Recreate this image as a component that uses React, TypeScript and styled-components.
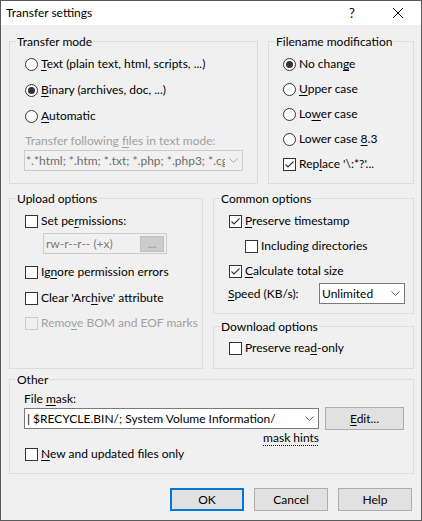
import React from "react";
import styled, { createGlobalStyle } from "styled-components";

const GlobalStyle = createGlobalStyle`
  html, body {
    margin: 0;
    padding: 0;
    background: #fff;
  }
  body {
    font-family: Lato, "Noto Sans", sans-serif;
    font-size: 12px;
    color: #000;
  }
  * {
    box-sizing: border-box;
  }
`;

const Window = styled.div`
  width: 422px;
  height: 521px;
  border: 1px solid #5a5a5a;
  background: #f0f0f0;
  display: flex;
  flex-direction: column;
`;

const TitleBar = styled.div`
  height: 24px;
  flex: none;
  background: #fff;
  display: flex;
  align-items: center;
  padding-left: 5px;
`;

const Caption = styled.div`
  flex: 1;
  line-height: 16px;
`;

const CaptionButton = styled.div`
  width: 46px;
  height: 24px;
  display: flex;
  align-items: center;
  justify-content: center;
  font-size: 13px;
`;

const Client = styled.div`
  flex: 1;
  display: flex;
  flex-direction: column;
  padding: 16px 7px 0 8px;
`;

const TopRow = styled.div`
  display: grid;
  grid-template-columns: 249px 146px;
  column-gap: 10px;
`;

const MidRow = styled.div`
  display: grid;
  grid-template-columns: 194px 201px;
  column-gap: 10px;
  margin-top: 14px;
`;

const SideColumn = styled.div`
  display: flex;
  flex-direction: column;
  gap: 12px;
`;

const Group = styled.div<{ $mt?: number }>`
  border: 1px solid #dcdcdc;
  display: flex;
  flex-direction: column;
  margin-top: ${p => p.$mt ?? 0}px;
`;

const GroupTitle = styled.div`
  align-self: flex-start;
  margin: -8px 0 0 6px;
  padding: 0 1px;
  line-height: 15px;
  background: #f0f0f0;
  white-space: nowrap;
`;

const GroupBody = styled.div<{ $pl: number; $pr?: number; $pb?: number }>`
  display: flex;
  flex-direction: column;
  padding: 0 ${p => p.$pr ?? 0}px ${p => p.$pb ?? 0}px ${p => p.$pl}px;
`;

const Option = styled.div<{ $mt?: number; $indent?: number; $disabled?: boolean }>`
  display: flex;
  align-items: center;
  gap: 3px;
  height: 16px;
  line-height: 16px;
  white-space: nowrap;
  margin-top: ${p => p.$mt ?? 0}px;
  margin-left: ${p => p.$indent ?? 0}px;
  color: ${p => (p.$disabled ? "#a0a0a0" : "#000")};
`;

const Label = styled.div<{ $mt?: number; $ml?: number; $disabled?: boolean }>`
  height: 16px;
  line-height: 16px;
  white-space: nowrap;
  margin-top: ${p => p.$mt ?? 0}px;
  margin-left: ${p => p.$ml ?? 0}px;
  color: ${p => (p.$disabled ? "#a0a0a0" : "#000")};
`;

const Key = styled.span`
  text-decoration: underline;
  text-underline-offset: 2px;
`;

const RadioCircle = styled.span<{ $on?: boolean }>`
  width: 13px;
  height: 13px;
  flex: none;
  border: 1px solid #333;
  border-radius: 50%;
  background: #fff;
  display: flex;
  align-items: center;
  justify-content: center;

  &::after {
    content: "";
    display: ${p => (p.$on ? "block" : "none")};
    width: 7px;
    height: 7px;
    border-radius: 50%;
    background: #333;
  }
`;

const Box = styled.span<{ $disabled?: boolean }>`
  width: 13px;
  height: 13px;
  flex: none;
  border: 1px solid ${p => (p.$disabled ? "#cccccc" : "#333")};
  background: ${p => (p.$disabled ? "#f0f0f0" : "#fff")};
  display: flex;
  align-items: center;
  justify-content: center;
`;

const Combo = styled.div<{ $w: number; $mt?: number; $ml?: number; $disabled?: boolean }>`
  width: ${p => p.$w}px;
  height: 21px;
  flex: none;
  margin-top: ${p => p.$mt ?? 0}px;
  margin-left: ${p => p.$ml ?? 0}px;
  border: 1px solid ${p => (p.$disabled ? "#cccccc" : "#7a7a7a")};
  background: ${p => (p.$disabled ? "#f0f0f0" : "#fff")};
  color: ${p => (p.$disabled ? "#6d6d6d" : "#000")};
  display: flex;
  align-items: center;
  padding-left: ${p => (p.$disabled ? 1 : 2)}px;
`;

const ComboText = styled.span`
  flex: 1;
  overflow: hidden;
  white-space: nowrap;
  line-height: 16px;
`;

const ComboArrow = styled.span`
  width: 17px;
  flex: none;
  display: flex;
  justify-content: center;
  align-items: center;
`;

const PermsField = styled.div`
  width: 124px;
  height: 21px;
  margin: 4px 0 0 18px;
  border: 1px solid #cccccc;
  background: #f0f0f0;
  color: #7a7a7a;
  display: flex;
  align-items: center;
  padding: 0 2px 0 2px;
`;

const PermsText = styled.span`
  flex: 1;
  line-height: 16px;
`;

const DotsButton = styled.span`
  width: 24px;
  height: 16px;
  background: #cccccc;
  border: 1px solid #bfbfbf;
  color: #8a8a8a;
  display: flex;
  align-items: center;
  justify-content: center;
  line-height: 12px;
`;

const SpeedRow = styled.div`
  display: flex;
  align-items: center;
  justify-content: space-between;
  margin-top: 4px;
  height: 21px;
`;

const MaskRow = styled.div`
  display: flex;
  align-items: center;
  gap: 6px;
  height: 23px;
  margin-left: -1px;
`;

const HintRow = styled.div`
  width: 295px;
  margin-left: -1px;
  height: 16px;
  line-height: 16px;
  text-align: right;
`;

const Hint = styled.span`
  text-decoration: underline dotted #000;
  text-underline-offset: 3px;
`;

const Button = styled.div<{ $w: number; $default?: boolean }>`
  width: ${p => p.$w}px;
  height: 23px;
  flex: none;
  background: #e1e1e1;
  border: ${p => (p.$default ? "2px solid #0078d7" : "1px solid #adadad")};
  display: flex;
  align-items: center;
  justify-content: center;
  line-height: 16px;
`;

const ButtonRow = styled.div`
  display: flex;
  justify-content: flex-end;
  gap: 10px;
  margin-top: 14px;
  padding-right: 2px;
`;

const Chevron = ({ color = "#606060" }: { color?: string }) => (
  <svg width="9" height="5" viewBox="0 0 9 5">
    <path d="M0.5 0.5 L4.5 4.5 L8.5 0.5" fill="none" stroke={color} strokeWidth="1" />
  </svg>
);

const Radio = ({ on, children, mt }: { on?: boolean; children: React.ReactNode; mt?: number }) => (
  <Option $mt={mt}>
    <RadioCircle $on={on} />
    <span>{children}</span>
  </Option>
);

const Check = ({
  on,
  disabled,
  children,
  mt,
  indent,
}: {
  on?: boolean;
  disabled?: boolean;
  children: React.ReactNode;
  mt?: number;
  indent?: number;
}) => (
  <Option $mt={mt} $indent={indent} $disabled={disabled}>
    <Box $disabled={disabled}>
      {on && (
        <svg width="11" height="11" viewBox="0 0 11 11">
          <path d="M1.5 5.5 L4 8 L9.5 2.5" fill="none" stroke="#333" strokeWidth="1.1" />
        </svg>
      )}
    </Box>
    <span>{children}</span>
  </Option>
);

const textMask =
  "*.*html; *.htm; *.txt; *.php; *.php3; *.cgi; *.c; *.cpp; *.h; *.pas; *.bas; *.tex; *.pl; *.js; .htaccess; *.xtml; *.css; *.cfg; *.ini; *.sh; *.xml";

export default function App() {
  return (
    <>
      <GlobalStyle />
      <Window>
        <TitleBar>
          <Caption>Transfer settings</Caption>
          <CaptionButton>?</CaptionButton>
          <CaptionButton>
            <svg width="10" height="10" viewBox="0 0 10 10">
              <path d="M0 0 L10 10 M10 0 L0 10" stroke="#000" strokeWidth="1" />
            </svg>
          </CaptionButton>
        </TitleBar>
        <Client>
          <TopRow>
            <Group>
              <GroupTitle>Transfer mode</GroupTitle>
              <GroupBody $pl={15} $pb={12}>
                <Radio mt={7}>
                  <Key>T</Key>ext (plain text, html, scripts, ...)
                </Radio>
                <Radio on mt={10}>
                  <Key>B</Key>inary (archives, doc, ...)
                </Radio>
                <Radio mt={10}>
                  <Key>A</Key>utomatic
                </Radio>
                <Label $mt={9} $disabled>
                  Transfer following <Key>f</Key>iles in text mode:
                </Label>
                <Combo $w={219} $mt={1} $ml={-1} $disabled>
                  <ComboText>{textMask}</ComboText>
                  <ComboArrow>
                    <Chevron color="#a8a8a8" />
                  </ComboArrow>
                </Combo>
              </GroupBody>
            </Group>
            <Group>
              <GroupTitle>Filename modification</GroupTitle>
              <GroupBody $pl={14}>
                <Radio on mt={7}>
                  No chan<Key>g</Key>e
                </Radio>
                <Radio mt={9}>
                  <Key>U</Key>pper case
                </Radio>
                <Radio mt={9}>
                  Lo<Key>w</Key>er case
                </Radio>
                <Radio mt={9}>
                  Lower case <Key>8</Key>.3
                </Radio>
                <Check on mt={9}>
                  Rep<Key>l</Key>ace '\:*?'...
                </Check>
              </GroupBody>
            </Group>
          </TopRow>

          <MidRow>
            <Group>
              <GroupTitle>Upload options</GroupTitle>
              <GroupBody $pl={15}>
                <Check mt={7}>
                  Set pe<Key>r</Key>missions:
                </Check>
                <PermsField>
                  <PermsText>rw-r--r-- (+x)</PermsText>
                  <DotsButton>...</DotsButton>
                </PermsField>
                <Check mt={10}>
                  Ig<Key>n</Key>ore permission errors
                </Check>
                <Check mt={10}>
                  Clear 'Arc<Key>h</Key>ive' attribute
                </Check>
                <Check mt={9} disabled>
                  Remo<Key>v</Key>e BOM and EOF marks
                </Check>
              </GroupBody>
            </Group>
            <SideColumn>
              <Group>
                <GroupTitle>Common options</GroupTitle>
                <GroupBody $pl={15} $pr={8} $pb={9}>
                  <Check on mt={7}>
                    <Key>P</Key>reserve timestamp
                  </Check>
                  <Check mt={9} indent={16}>
                    Including directories
                  </Check>
                  <Check on mt={9}>
                    <Key>C</Key>alculate total size
                  </Check>
                  <SpeedRow>
                    <Label $ml={-1}>
                      <Key>S</Key>peed (KB/s):
                    </Label>
                    <Combo $w={86}>
                      <ComboText>Unlimited</ComboText>
                      <ComboArrow>
                        <Chevron />
                      </ComboArrow>
                    </Combo>
                  </SpeedRow>
                </GroupBody>
              </Group>
              <Group>
                <GroupTitle>Download options</GroupTitle>
                <GroupBody $pl={15} $pb={12}>
                  <Check mt={6}>
                    Preserve rea<Key>d</Key>-only
                  </Check>
                </GroupBody>
              </Group>
            </SideColumn>
          </MidRow>

          <Group $mt={10}>
            <GroupTitle>Other</GroupTitle>
            <GroupBody $pl={15} $pb={11}>
              <Label $mt={4} $ml={-1}>
                File <Key>m</Key>ask:
              </Label>
              <MaskRow>
                <Combo $w={295}>
                  <ComboText>| $RECYCLE.BIN/; System Volume Information/</ComboText>
                  <ComboArrow>
                    <Chevron />
                  </ComboArrow>
                </Combo>
                <Button $w={79}>
                  <span>
                    <Key>E</Key>dit...
                  </span>
                </Button>
              </MaskRow>
              <HintRow>
                <Hint>mask hints</Hint>
              </HintRow>
              <Check>
                <Key>N</Key>ew and updated files only
              </Check>
            </GroupBody>
          </Group>

          <ButtonRow>
            <Button $w={74} $default>
              OK
            </Button>
            <Button $w={74}>Cancel</Button>
            <Button $w={74}>Help</Button>
          </ButtonRow>
        </Client>
      </Window>
    </>
  );
}
